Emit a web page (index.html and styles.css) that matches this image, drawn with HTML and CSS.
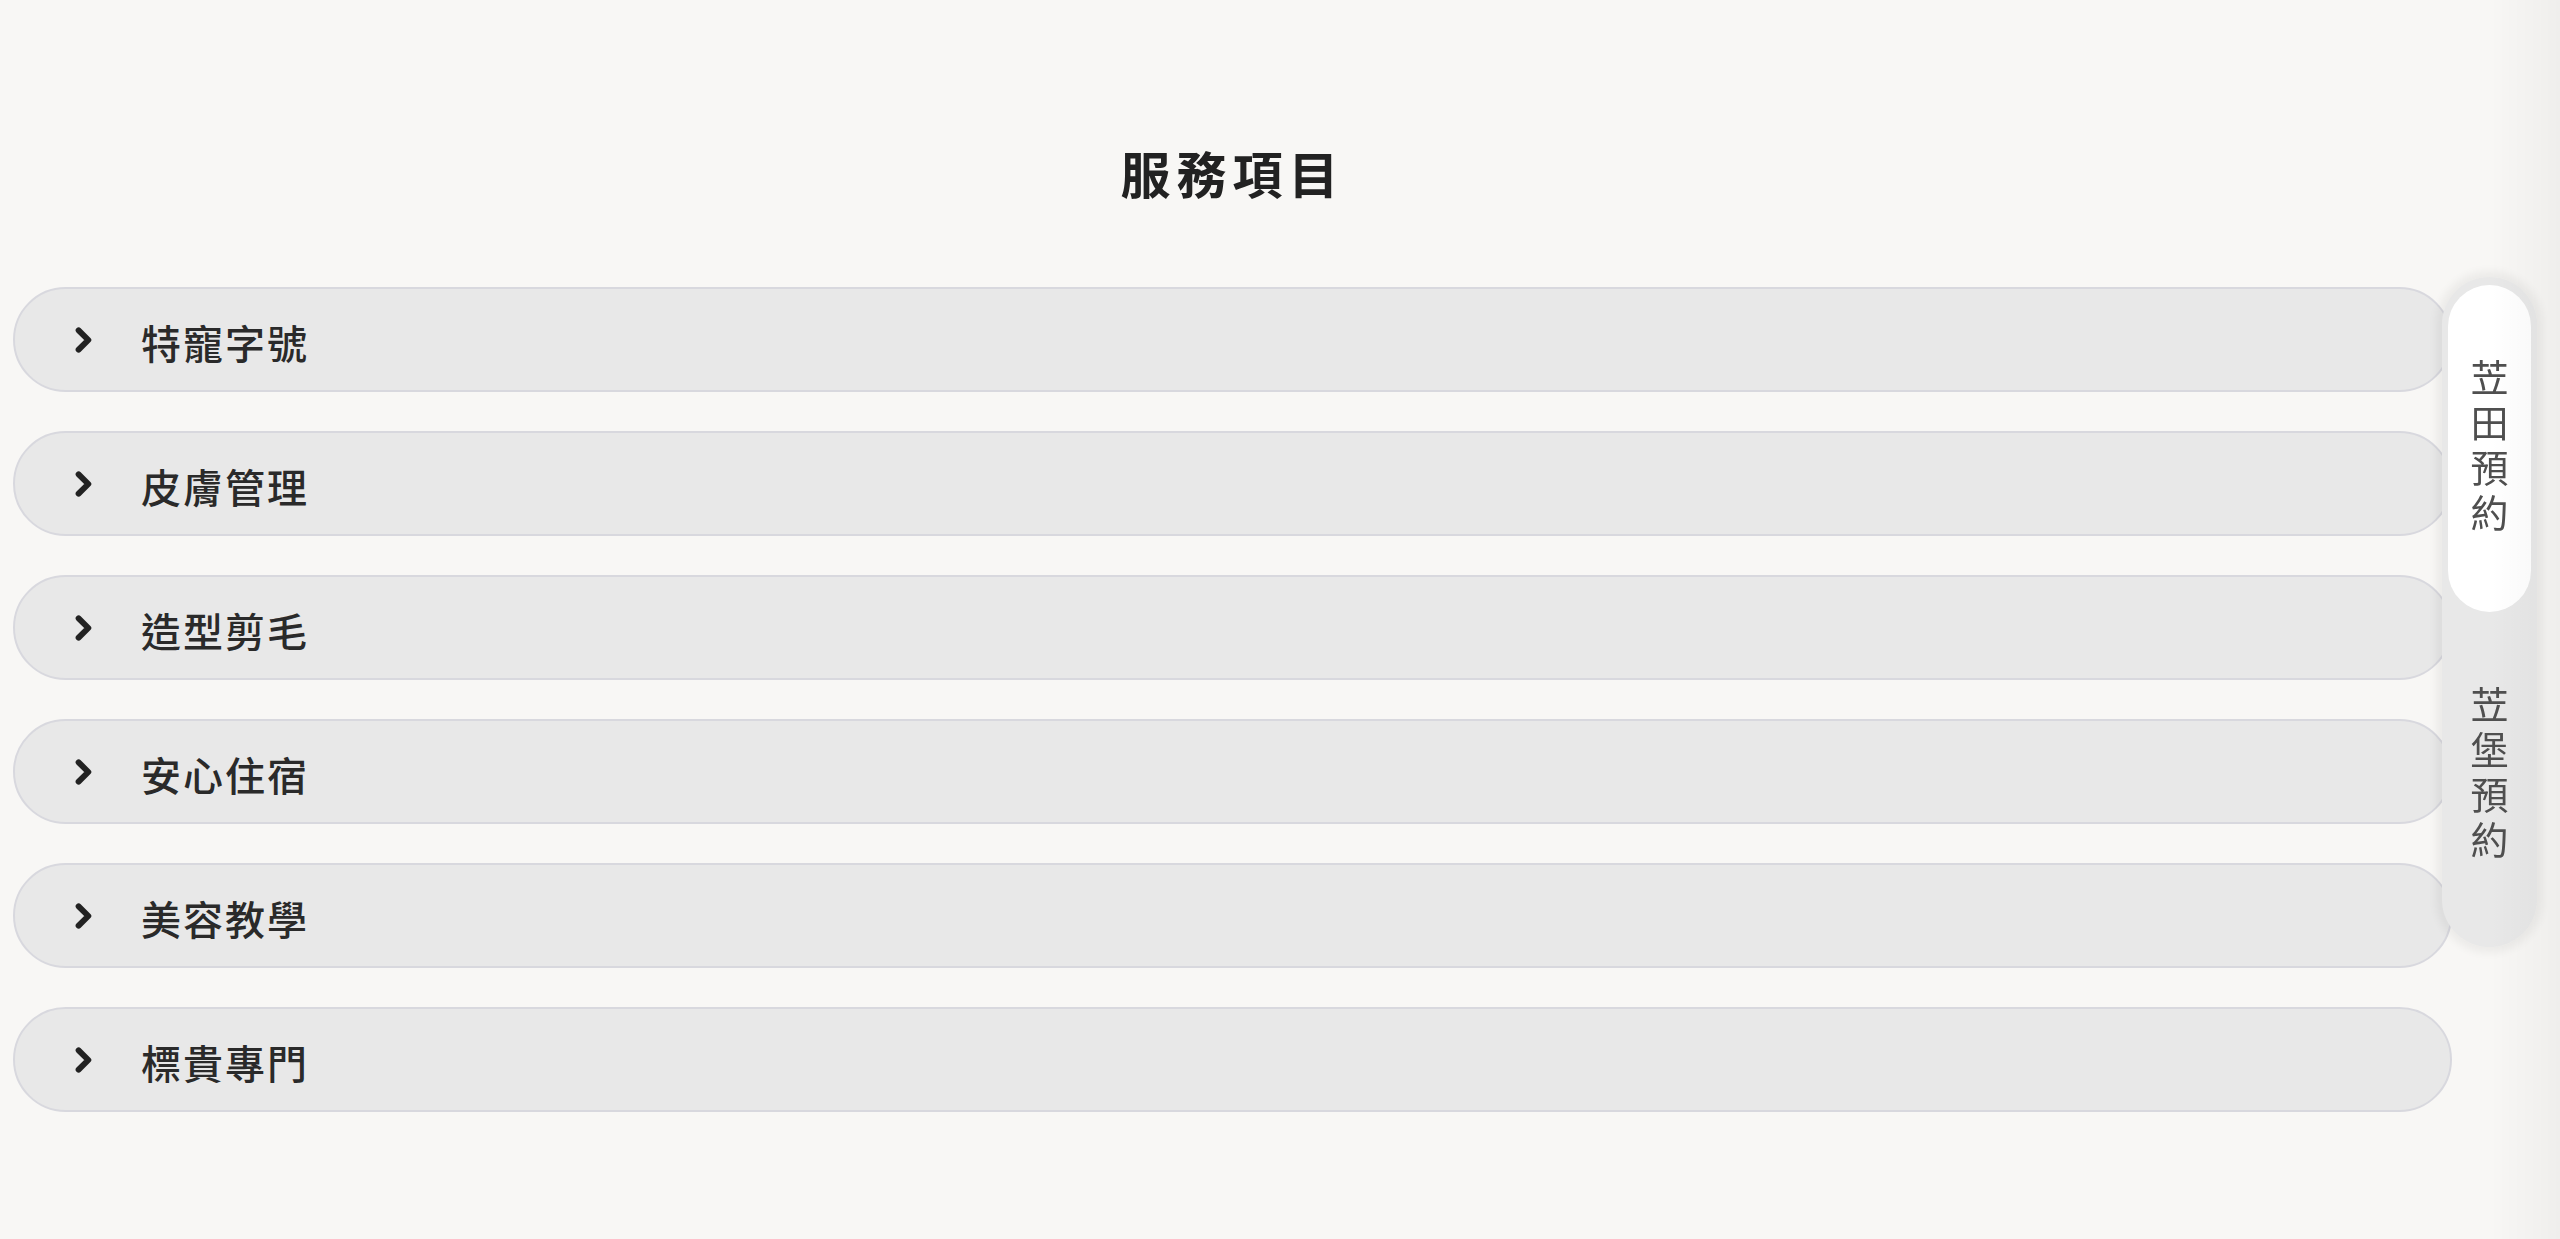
FILE: index.html
```html
<!DOCTYPE html>
<html lang="zh-Hant">
<head>
	<meta charset="UTF-8">
	<title>服務項目</title>
	<link rel="stylesheet" href="styles.css">
</head>
<body>
	<div class="page">
		<h1 class="title">服務項目</h1>
		<div class="list">
			<div class="item"><svg class="arrow" viewBox="0 0 16 26"><polyline points="3,4 12,13 3,22"/></svg><span>特寵字號</span></div>
			<div class="item"><svg class="arrow" viewBox="0 0 16 26"><polyline points="3,4 12,13 3,22"/></svg><span>皮膚管理</span></div>
			<div class="item"><svg class="arrow" viewBox="0 0 16 26"><polyline points="3,4 12,13 3,22"/></svg><span>造型剪毛</span></div>
			<div class="item"><svg class="arrow" viewBox="0 0 16 26"><polyline points="3,4 12,13 3,22"/></svg><span>安心住宿</span></div>
			<div class="item"><svg class="arrow" viewBox="0 0 16 26"><polyline points="3,4 12,13 3,22"/></svg><span>美容教學</span></div>
			<div class="item"><svg class="arrow" viewBox="0 0 16 26"><polyline points="3,4 12,13 3,22"/></svg><span>標貴專門</span></div>
		</div>
	</div>
	<div class="side">
		<div class="side-btn active">苙田預約</div>
		<div class="side-btn">苙堡預約</div>
	</div>
</body>
</html>
```

FILE: styles.css
```css
html,body{
	margin:0;
	padding:0;
}
body{
	background:#f8f7f5;
	font-family:"Noto Sans CJK TC","Noto Sans",sans-serif;
	color:#262626;
	min-height:1239px;
}
body::after{
	content:"";
	position:fixed;
	top:0;
	right:0;
	width:70px;
	height:100%;
	background:linear-gradient(to right,rgba(0,0,0,0),rgba(0,0,0,0.035));
	pointer-events:none;
}
.page{
	padding:139px 0 0 13px;
	width:2439px;
}
.title{
	margin:0 0 81px 0;
	text-align:center;
	font-size:50px;
	font-weight:700;
	letter-spacing:6px;
	line-height:67px;
	color:#222;
}
.list{
	display:flex;
	flex-direction:column;
	gap:39px;
}
.item{
	display:flex;
	align-items:center;
	box-sizing:border-box;
	height:105px;
	padding-left:60px;
	background:#e8e8e8;
	border:2px solid #d8d8de;
	border-radius:53px;
	font-size:40px;
	font-weight:500;
	letter-spacing:2px;
	color:#2a2a2a;
}
.arrow{
	width:18px;
	height:28px;
	margin-right:48px;
	fill:none;
	stroke:#222;
	stroke-width:5.5;
	stroke-linecap:round;
	stroke-linejoin:round;
}
.item span{
	margin-top:4px;
}
.side{
	position:fixed;
	top:277px;
	right:23px;
	width:95px;
	box-sizing:border-box;
	padding:8px 6px;
	background:#e8e8e8;
	border-radius:48px;
	box-shadow:0 0 8px 6px rgba(0,0,0,0.05);
	display:flex;
	flex-direction:column;
}
.side-btn{
	height:327px;
	border-radius:42px;
	display:flex;
	align-items:center;
	justify-content:center;
	writing-mode:vertical-rl;
	font-size:38px;
	letter-spacing:7px;
	color:#4f4f4f;
}
.side-btn.active{
	background:#fff;
}
```
